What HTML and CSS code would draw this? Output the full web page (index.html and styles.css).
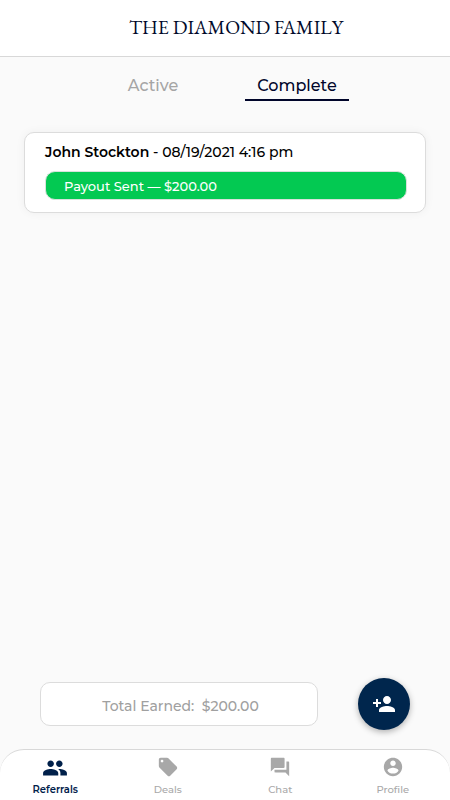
FILE: index.html
```html
<!DOCTYPE html>
<html lang="en">
<head>
  <meta charset="UTF-8">
  <meta name="viewport" content="width=device-width, initial-scale=1.0">
  <title>The Diamond Family</title>
  <link rel="stylesheet" href="styles.css">
</head>
<body>
  <header class="header">
    <h1>THE DIAMOND FAMILY</h1>
  </header>

  <div class="tabs">
    <button class="tab">Active</button>
    <button class="tab selected">Complete</button>
  </div>

  <main class="list">
    <div class="card">
      <p class="card-title"><strong>John Stockton</strong> - 08/19/2021 4:16 pm</p>
      <div class="status">Payout Sent — $200.00</div>
    </div>
  </main>

  <div class="actions">
    <div class="total">Total Earned:&nbsp; $200.00</div>
    <button class="add" aria-label="Add referral">
      <svg width="24" height="24" viewBox="0 0 24 24"><path d="M15 12c2.210 0 4-1.790 4-4s-1.790-4-4-4-4 1.790-4 4 1.790 4 4 4zm-9-2V7H4v3H1v2h3v3h2v-3h3v-2H6zm9 4c-2.670 0-8 1.340-8 4v2h16v-2c0-2.660-5.330-4-8-4z"/></svg>
    </button>
  </div>

  <nav class="nav">
    <a class="nav-item current">
      <svg width="26" height="26" viewBox="0 0 24 24"><path d="M16 11c1.660 0 2.990-1.340 2.990-3S17.660 5 16 5s-3 1.340-3 3 1.340 3 3 3zm-8 0c1.660 0 2.990-1.340 2.990-3S9.660 5 8 5 5 6.340 5 8s1.340 3 3 3zm0 2c-2.330 0-7 1.170-7 3.500V19h14v-2.500c0-2.330-4.670-3.500-7-3.500zm8 0c-.29 0-.62.02-.97.05 1.160.84 1.970 1.970 1.970 3.450V19h6v-2.500c0-2.330-4.670-3.500-7-3.500z"/></svg>
      <span>Referrals</span>
    </a>
    <a class="nav-item">
      <svg width="22" height="22" viewBox="0 0 24 24"><path d="M21.410 11.580l-9-9C12.050 2.220 11.550 2 11 2H4c-1.100 0-2 .9-2 2v7c0 .55.22 1.050.59 1.420l9 9c.36.36.86.58 1.410.58.55 0 1.050-.22 1.410-.59l7-7c.37-.36.59-.86.59-1.410 0-.55-.23-1.060-.59-1.420zM5.500 7C4.670 7 4 6.330 4 5.500S4.670 4 5.500 4 7 4.670 7 5.500 6.330 7 5.500 7z"/></svg>
      <span>Deals</span>
    </a>
    <a class="nav-item">
      <svg width="22" height="22" viewBox="0 0 24 24"><path d="M21 6h-2v9H6v2c0 .55.45 1 1 1h11l4 4V7c0-.55-.45-1-1-1zm-4 6V3c0-.55-.45-1-1-1H3c-.55 0-1 .45-1 1v14l4-4h10c.55 0 1-.45 1-1z"/></svg>
      <span>Chat</span>
    </a>
    <a class="nav-item">
      <svg width="22" height="22" viewBox="0 0 24 24"><path d="M12 2C6.480 2 2 6.480 2 12s4.480 10 10 10 10-4.480 10-10S17.520 2 12 2zm0 3c1.660 0 3 1.340 3 3s-1.340 3-3 3-3-1.340-3-3 1.340-3 3-3zm0 14.200c-2.500 0-4.710-1.280-6-3.220.03-1.990 4-3.080 6-3.080 1.990 0 5.970 1.090 6 3.080-1.290 1.940-3.500 3.220-6 3.220z"/></svg>
      <span>Profile</span>
    </a>
  </nav>
</body>
</html>
```

FILE: styles.css
```css
* {
  box-sizing: border-box;
}
body {
  display: flex;
  flex-direction: column;
  height: 100vh;
  margin: 0;
  background: #fafafa;
  color: #000;
  font-family: Montserrat, Inter, sans-serif;
}
button {
  padding: 0;
  border: 0;
  background: none;
  font-family: inherit;
}
svg {
  display: block;
  fill: currentColor;
}
.header {
  height: 57px;
  padding-left: 129px;
  background: #fff;
  border-bottom: 1px solid #d8d8d8;
}
h1 {
  margin: 0;
  color: #00092b;
  font: 400 19.5px/55px "EB Garamond", "Liberation Serif", serif;
  white-space: nowrap;
}
.tabs {
  display: flex;
  gap: 40px;
  padding: 13px 0 0 101px;
}
.tab {
  width: 104px;
  height: 31px;
  padding-top: 2px;
  border-bottom: 2px solid transparent;
  color: #a5a5a5;
  font-size: 16px;
  font-weight: 500;
  line-height: 27px;
}
.tab.selected {
  color: #00052a;
  border-color: #00052a;
}
.list {
  flex: 1;
  padding: 31px 24px 0;
}
.card {
  height: 81px;
  padding: 9px 18px 0 20px;
  background: #fff;
  border: 1px solid #dcdcdc;
  border-radius: 10px;
  box-shadow: 0 0 10px rgba(0, 0, 0, 0.05);
}
.card-title {
  margin: 0;
  font-size: 14px;
  font-weight: 500;
  line-height: 20px;
  white-space: nowrap;
}
.card-title strong {
  font-weight: 600;
}
.status {
  height: 29px;
  margin-top: 9px;
  padding-left: 18px;
  background: #03c952;
  border: 1px solid #d9e2dc;
  border-radius: 10px;
  color: #fff;
  font-size: 13px;
  font-weight: 500;
  line-height: 28px;
}
.actions {
  display: flex;
  align-items: center;
  gap: 40px;
  padding: 0 40px 19px;
}
.total {
  flex: 1;
  height: 44px;
  padding-left: 3px;
  background: #fff;
  border: 1px solid #dcdcdc;
  border-radius: 10px;
  color: #a0a0a0;
  font-size: 14px;
  font-weight: 500;
  line-height: 46px;
  text-align: center;
}
.add {
  display: flex;
  align-items: center;
  justify-content: center;
  width: 52px;
  height: 52px;
  border-radius: 50%;
  background: #00264d;
  color: #fff;
  box-shadow: 0 2px 6px rgba(0, 0, 0, 0.3);
}
.nav {
  display: grid;
  grid-template-columns: repeat(4, 112.5px);
  height: 51px;
  background: #fff;
  border-top: 1px solid #d8d8d8;
  border-radius: 24px 24px 0 0;
}
.nav-item {
  display: flex;
  flex-direction: column;
  align-items: center;
  padding: 6px 2px 0 0;
  color: #a8a8a8;
  font-size: 10px;
  font-weight: 500;
  line-height: 12px;
}
.nav-item span {
  margin-top: 6px;
}
.nav-item.current {
  padding-top: 5px;
  color: #00204a;
  font-weight: 600;
}
.nav-item.current span {
  margin-top: 3px;
}
```
